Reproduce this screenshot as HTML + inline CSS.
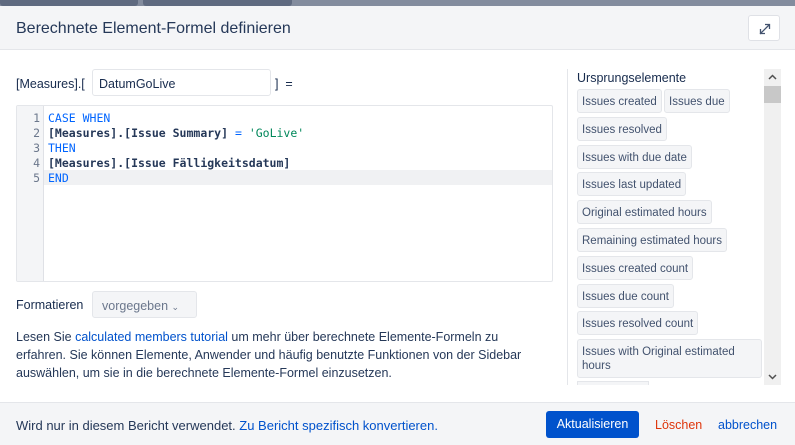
<!DOCTYPE html>
<html><head><meta charset="utf-8"><style>
*{box-sizing:border-box;margin:0;padding:0}
body{width:795px;height:445px;overflow:hidden;background:#fff;font-family:"Liberation Sans","DejaVu Sans",sans-serif;color:#172b4d;position:relative;font-size:12.5px}
.abs{position:absolute}
.tag{position:absolute;left:577px;height:24px;background:#f4f5f7;border:1px solid #e4e6ea;border-radius:3px;font-size:11.5px;color:#42526e;padding:5px 4px 4px;white-space:nowrap;line-height:14px}
.code{font-family:"DejaVu Sans Mono","Liberation Mono",monospace;font-size:11.5px;line-height:15px;white-space:pre}
.kw{color:#0065ff}
</style></head><body>
<div class="abs" style="left:0;top:0;width:795px;height:6px;background:#838c9e"></div>
<div class="abs" style="left:0;top:0;width:138px;height:6px;background:#5f6a80;border-radius:0 0 3px 3px"></div>
<div class="abs" style="left:143px;top:0;width:149px;height:6px;background:#5f6a80;border-radius:0 0 3px 3px"></div>
<div class="abs" style="left:0;top:6px;width:795px;height:44px;background:#f4f5f7;border-bottom:1px solid #e4e6ea"></div>
<div class="abs" style="left:16px;top:20px;font-size:16px;color:#253858">Berechnete Element-Formel definieren</div>
<div class="abs" style="left:748px;top:15px;width:32px;height:26px;background:#fff;border:1px solid #dfe1e6;border-radius:3px">
<svg width="32" height="26" viewBox="0 0 32 26"><g stroke="#42526e" stroke-width="1.3" fill="none"><path d="M11 18L20 9M16 8.5h4.5v4.5M11.5 13v4.5h4.5"/></g></svg></div>

<div class="abs" style="left:16px;top:77px;font-size:12.5px">[Measures].[</div>
<div class="abs" style="left:92px;top:69px;width:179px;height:27px;border:1px solid #e4e6ea;border-radius:3px;padding:7px 6px;font-size:12.5px">DatumGoLive</div>
<div class="abs" style="left:275px;top:77px">]&nbsp; =</div>

<div class="abs" style="left:16px;top:105px;width:537px;height:177px;border:1px solid #e4e6ea;border-radius:2px;overflow:hidden">
<div class="abs" style="left:0;top:0;width:27px;height:177px;background:#f4f5f7;border-right:1px solid #dfe1e6"></div>
<div class="abs" style="left:27px;top:64px;width:510px;height:15px;background:#f0f1f3"></div>
<div class="abs code" style="left:0;top:5px;width:23px;text-align:right;color:#6b778c">1
2
3
4
5</div>
<div class="abs code" style="left:31px;top:5px;color:#253858;font-weight:bold"><span class="kw" style="font-weight:normal">CASE WHEN</span>
[Measures].[Issue Summary] <span class="kw" style="font-weight:normal">=</span> <span style="color:#00875a;font-weight:normal">'GoLive'</span>
<span class="kw" style="font-weight:normal">THEN</span>
[Measures].[Issue Fälligkeitsdatum]
<span class="kw" style="font-weight:normal">END</span></div>
</div>

<div class="abs" style="left:16px;top:298px">Formatieren</div>
<div class="abs" style="left:92px;top:291px;width:105px;height:27px;background:#f4f5f7;border:1px solid #e4e6ea;border-radius:3px;padding:7px 9px;color:#6b778c">vorgegeben <span style="font-size:9px">&#8964;</span></div>
<div class="abs" style="left:16px;top:328px;width:526px;line-height:18px;font-size:12.5px;color:#253858">Lesen Sie <span style="color:#0052cc">calculated members tutorial</span> um mehr über berechnete Elemente-Formeln zu erfahren. Sie können Elemente, Anwender und häufig benutzte Funktionen von der Sidebar auswählen, um sie in die berechnete Elemente-Formel einzusetzen.</div>

<div class="abs" style="left:567px;top:69px;width:1px;height:316px;background:#e4e6ea"></div>
<div class="abs" style="left:577px;top:71px;font-size:12.5px;color:#172b4d">Ursprungselemente</div>
<div class="tag" style="top:89px">Issues created</div>
<div class="tag" style="top:89px;left:664px">Issues due</div>
<div class="tag" style="top:117px">Issues resolved</div>
<div class="tag" style="top:145px">Issues with due date</div>
<div class="tag" style="top:172px">Issues last updated</div>
<div class="tag" style="top:200px">Original estimated hours</div>
<div class="tag" style="top:228px">Remaining estimated hours</div>
<div class="tag" style="top:256px">Issues created count</div>
<div class="tag" style="top:284px">Issues due count</div>
<div class="tag" style="top:311px">Issues resolved count</div>
<div class="tag" style="top:339px;width:185px;height:39px;white-space:normal">Issues with Original estimated hours</div>
<div class="abs" style="left:577px;top:381px;width:72px;height:4px;background:#f4f5f7;border:1px solid #e4e6ea;border-bottom:none"></div>
<div class="abs" style="left:764px;top:69px;width:17px;height:316px;background:#f0f0f0"></div>
<div class="abs" style="left:764px;top:86px;width:17px;height:17px;background:#c8c8c8"></div>
<svg class="abs" style="left:764px;top:69px" width="17" height="316"><path d="M5 10l3.5-3.5L12 10" stroke="#505050" stroke-width="1.5" fill="none"/><path d="M5 306l3.5 3.5L12 306" stroke="#505050" stroke-width="1.5" fill="none"/></svg>

<div class="abs" style="left:0;top:402px;width:795px;height:43px;background:#f4f5f7;border-top:1px solid #e4e6ea"></div>
<div class="abs" style="left:16px;top:418px;font-size:13px;color:#253858">Wird nur in diesem Bericht verwendet. <span style="color:#0052cc">Zu Bericht spezifisch konvertieren.</span></div>
<div class="abs" style="left:546px;top:411px;width:93px;height:27px;background:#0052cc;border-radius:3px;color:#fff;text-align:center;line-height:27px;font-size:12.5px">Aktualisieren</div>
<div class="abs" style="left:655px;top:418px;color:#de350b">Löschen</div>
<div class="abs" style="left:718px;top:418px;color:#0052cc">abbrechen</div>
</body></html>
